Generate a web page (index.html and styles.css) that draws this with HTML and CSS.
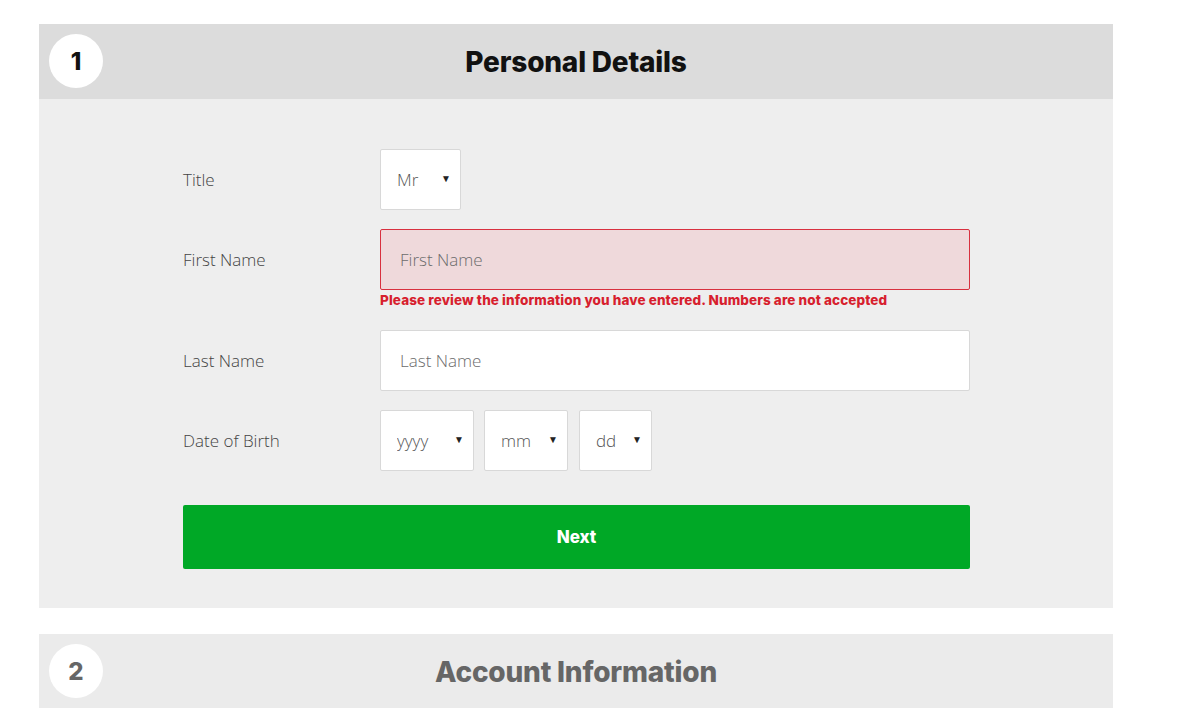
FILE: index.html
```html
<!DOCTYPE html>
<html lang="en">
<head>
    <meta charset="UTF-8">
    <meta name="viewport" content="width=device-width, initial-scale=1.0">
    <title>Registration</title>
    <link rel="stylesheet" href="styles.css">
</head>
<body>
    <div class="page">
        <section class="step">
            <div class="step-head">
                <span class="step-num">1</span>
                <h2>Personal Details</h2>
            </div>
            <div class="step-body">
                <form class="form">
                    <div class="row">
                        <label class="label" for="title">Title</label>
                        <div class="field">
                            <span class="select" style="width: 81px">
                                <select id="title">
                                    <option>Mr</option>
                                    <option>Mrs</option>
                                    <option>Ms</option>
                                </select>
                            </span>
                        </div>
                    </div>
                    <div class="row">
                        <label class="label" for="first">First Name</label>
                        <div class="field">
                            <input class="input error" id="first" type="text" placeholder="First Name">
                            <p class="error-text">Please review the information you have entered. Numbers are not accepted</p>
                        </div>
                    </div>
                    <div class="row">
                        <label class="label" for="last">Last Name</label>
                        <div class="field">
                            <input class="input" id="last" type="text" placeholder="Last Name">
                        </div>
                    </div>
                    <div class="row">
                        <label class="label" for="year">Date of Birth</label>
                        <div class="field dob">
                            <span class="select" style="width: 94px">
                                <select id="year"><option>yyyy</option></select>
                            </span>
                            <span class="select" style="width: 84px">
                                <select><option>mm</option></select>
                            </span>
                            <span class="select" style="width: 73px">
                                <select><option>dd</option></select>
                            </span>
                        </div>
                    </div>
                    <button type="button" class="next">Next</button>
                </form>
            </div>
        </section>

        <section class="step disabled">
            <div class="step-head">
                <span class="step-num">2</span>
                <h2>Account Information</h2>
            </div>
        </section>
    </div>
</body>
</html>
```

FILE: styles.css
```css
body {
    margin: 0;
    background-color: #fff;
    font-family: "Open Sans", Arial, sans-serif;
}
.page {
    width: 1074px;
    margin-left: 39px;
    padding-top: 24px;
}
.step {
    margin-bottom: 26px;
}
.step-head {
    position: relative;
    height: 75px;
    display: flex;
    align-items: center;
    justify-content: center;
    background-color: #dcdcdc;
}
.step-head h2 {
    margin: 0;
    font-family: Inter, "Open Sans", sans-serif;
    font-weight: 800;
    font-size: 28px;
    letter-spacing: -0.2px;
    color: #111;
}
.step-num {
    position: absolute;
    left: 10px;
    top: 10px;
    width: 54px;
    height: 54px;
    border-radius: 50%;
    background-color: #fff;
    display: flex;
    align-items: center;
    justify-content: center;
    font-family: Inter, sans-serif;
    font-weight: 800;
    font-size: 24px;
    color: #111;
}
.disabled .step-head {
    background-color: #ebebeb;
}
.disabled .step-head h2,
.disabled .step-num {
    color: #666;
}
.step-body {
    background-color: #eee;
    padding: 50px 143px 39px 144px;
}
.row {
    display: grid;
    grid-template-columns: 197px 1fr;
    margin-bottom: 19px;
}
.label {
    line-height: 61px;
    font-size: 17px;
    font-weight: 300;
    color: #444;
}
.field {
    display: flex;
    flex-direction: column;
}
.input {
    height: 61px;
    box-sizing: border-box;
    border: 1px solid #d8d8d8;
    background-color: #fff;
    padding: 0 19px;
    font-family: "Open Sans", Arial, sans-serif;
    font-size: 17px;
    font-weight: 300;
    color: #333;
    border-radius: 2px;
}
.input::placeholder {
    color: #6c6c6c;
}
.input.error {
    background-color: #efd9db;
    border-color: #d8303f;
}
.error-text {
    margin: 2px 0 3px;
    line-height: 16px;
    font-family: Inter, Arial, sans-serif;
    font-size: 13.5px;
    font-weight: 800;
    color: #d71f2e;
    letter-spacing: 0.1px;
}
.dob {
    flex-direction: row;
    gap: 10px;
}
.dob .select:last-child {
    margin-left: 1px;
}
.select {
    position: relative;
    display: block;
    height: 61px;
}
.select select {
    width: 100%;
    height: 100%;
    appearance: none;
    -webkit-appearance: none;
    border: 1px solid #d8d8d8;
    border-radius: 2px;
    background-color: #fff;
    padding: 0 0 0 16px;
    font-family: "Open Sans", Arial, sans-serif;
    font-size: 17px;
    font-weight: 300;
    color: #555;
}
.select::after {
    content: "\25BC";
    position: absolute;
    right: 10px;
    top: 22px;
    font-size: 10px;
    color: #222;
    pointer-events: none;
}
.next {
    display: block;
    width: 100%;
    height: 64px;
    margin-top: 34px;
    border: none;
    border-radius: 2px;
    background-color: #00a826;
    color: #fff;
    font-family: Inter, Arial, sans-serif;
    font-weight: 800;
    font-size: 17px;
    cursor: pointer;
}
```
